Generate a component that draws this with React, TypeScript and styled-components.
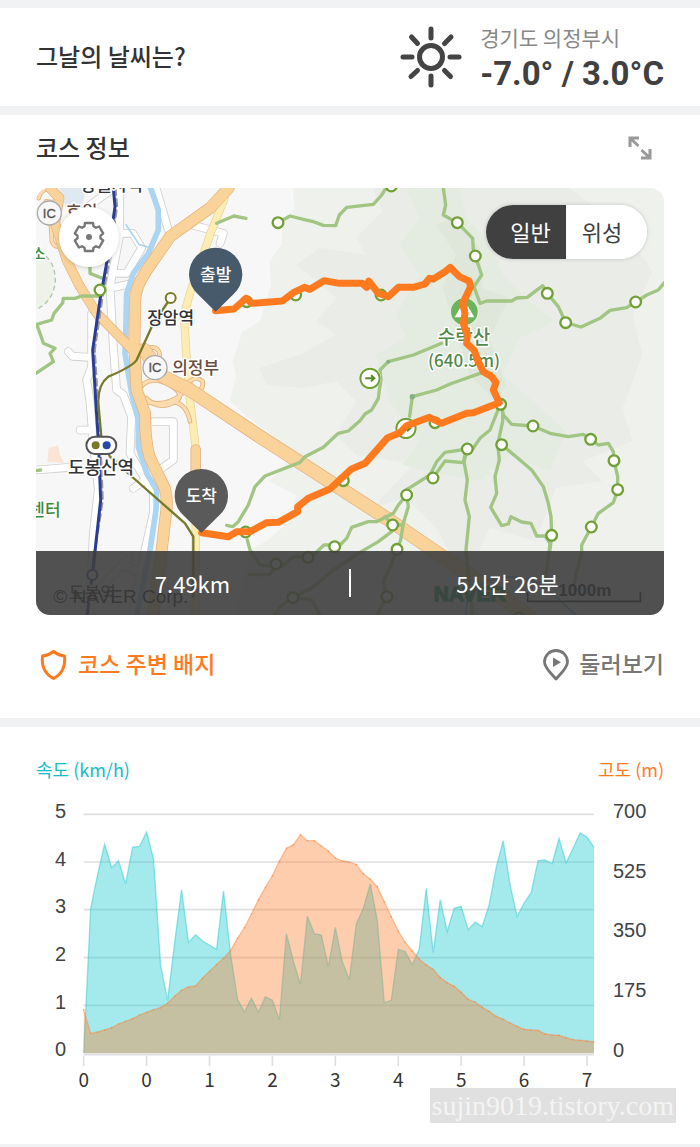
import React, { useState } from "react";
import styled, { createGlobalStyle } from "styled-components";

const sans = `"Noto Sans CJK KR", "Noto Sans", sans-serif`;

const GlobalStyle = createGlobalStyle`
  * { box-sizing: border-box; }
  body { margin: 0; background: #f1f2f4; font-family: ${sans}; color: #333; }
  button { font: inherit; color: inherit; border: 0; padding: 0; background: none; cursor: pointer; }
  h2, p { margin: 0; }
`;

const Page = styled.main`
  display: flex;
  flex-direction: column;
  gap: 9px;
  padding: 8px 0 3px;
`;

const Section = styled.section`
  position: relative;
  background: #fff;
  padding: 0 36px;
`;

const Title = styled.h2`
  padding-bottom: 2px;
  font-size: 24px;
  line-height: 36px;
  font-weight: 500;
`;

const WeatherRow = styled.div`
  display: flex;
  align-items: center;
  justify-content: space-between;
  height: 98px;
`;

const Weather = styled.div`
  display: flex;
  align-items: center;
  gap: 18px;
`;

const Place = styled.p`
  font-size: 21px;
  line-height: 34px;
  color: #888;
`;

const Temperature = styled.p`
  font-family: Roboto, sans-serif;
  font-size: 33px;
  line-height: 40px;
  font-weight: 700;
  color: #404040;
`;

const CourseHeader = styled.div`
  display: flex;
  align-items: center;
  justify-content: space-between;
  height: 66px;
  margin-bottom: 7px;
`;

const IconButton = styled.button`
  display: grid;
  place-items: center;
  width: 48px;
  height: 48px;
`;

const MapCard = styled.div`
  position: relative;
  overflow: hidden;
  border-radius: 14px;
  aspect-ratio: 628 / 427;
`;

const MapSvg = styled.svg`
  display: block;
  width: 100%;
  height: 100%;
`;

const SettingsButton = styled.button`
  position: absolute;
  top: 19px;
  left: 23px;
  display: grid;
  place-items: center;
  width: 60px;
  height: 60px;
  border-radius: 50%;
  background: #fff;
  box-shadow: 0 1px 4px rgba(0, 0, 0, 0.18);
`;

const Toggle = styled.div`
  position: absolute;
  top: 17px;
  right: 17px;
  display: flex;
  height: 54px;
  border-radius: 27px;
  overflow: hidden;
  background: #fff;
  box-shadow: 0 0 4px rgba(0, 0, 0, 0.18);
`;

const ToggleButton = styled.button<{ $on: boolean }>`
  width: 80px;
  padding-bottom: 2px;
  font-size: 22px;
  line-height: 52px;
  background: ${(p) => (p.$on ? "#404040" : "#fff")};
  color: ${(p) => (p.$on ? "#fff" : "#404040")};
  &:first-child { padding-left: 9px; }
  &:last-child { padding-right: 9px; width: 81px; }
`;

const StatsBar = styled.div`
  position: absolute;
  inset: auto 0 0;
  display: flex;
  align-items: center;
  height: 64px;
  background: rgba(62, 62, 62, 0.9);
`;

const Stat = styled.p`
  flex: 1;
  text-align: center;
  font-size: 22px;
  line-height: 28px;
  color: #fff;
  & + & { border-left: 2px solid #fff; }
`;

const Actions = styled.div`
  display: flex;
  align-items: center;
  justify-content: space-between;
  height: 99px;
  margin-bottom: 4px;
`;

const ActionButton = styled.button<{ $color: string }>`
  display: flex;
  align-items: center;
  gap: 9px;
  font-size: 23px;
  line-height: 32px;
  font-weight: 500;
  color: ${(p) => p.$color};
`;

const ActionText = styled.span`
  padding-bottom: 3px;
`;

const Legend = styled.div`
  display: flex;
  justify-content: space-between;
  padding-top: 28px;
  height: 63px;
`;

const LegendItem = styled.span<{ $color: string }>`
  font-size: 18px;
  line-height: 28px;
  color: ${(p) => p.$color};
`;

const ChartSvg = styled.svg`
  display: block;
  width: 100%;
  margin-bottom: 44px;
`;

const Watermark = styled.span`
  position: absolute;
  right: 24px;
  bottom: 21px;
  height: 35px;
  padding: 0 2px;
  font-family: "Liberation Serif", serif;
  font-size: 28px;
  line-height: 35px;
  color: #f4f4f4;
  background: rgba(214, 214, 214, 0.75);
`;

/* ---------- icons ---------- */

function SunIcon() {
  return (
    <svg width="62" height="62" viewBox="-31 -31 62 62" fill="none" stroke="#444" strokeWidth="5" strokeLinecap="round" aria-hidden="true">
      <circle r="11.5" />
      <path d="M0-19V-28M0 19V28M-19 0H-28M19 0H28M13.5-13.5L20-20M-13.5-13.5L-19.5-20M13.5 13.5L19.5 19.5M-13.5 13.5L-20 19.5" />
    </svg>
  );
}

function ExpandIcon() {
  return (
    <svg width="24" height="24" viewBox="0 0 24 24" fill="none" stroke="#999" strokeWidth="3" aria-hidden="true">
      <path d="M11 2H2V11M2 2L10.500 10" />
      <path d="M13 22H22V13M22 22L13.500 14" />
    </svg>
  );
}

function gearPath() {
  const parts: string[] = [];
  const at = (deg: number, r: number) => {
    const a = ((deg - 90) * Math.PI) / 180;
    return `${(Math.cos(a) * r).toFixed(2)} ${(Math.sin(a) * r).toFixed(2)}`;
  };
  for (let i = 0; i < 6; i++) {
    const c = i * 60;
    parts.push(at(c - 16, 14.6), at(c + 16, 14.6), at(c + 23, 11.6), at(c + 37, 11.6));
  }
  return `M${parts.join("L")}Z`;
}

function GearIcon() {
  return (
    <svg width="34" height="34" viewBox="-17 -17 34 34" aria-hidden="true">
      <path d={gearPath()} fill="none" stroke="#777" strokeWidth="2.4" strokeLinejoin="round" />
      <circle r="3" fill="#777" />
    </svg>
  );
}

function ShieldIcon() {
  return (
    <svg width="33" height="32" viewBox="0 0 33 32" fill="none" stroke="#ff7a1f" strokeWidth="3" strokeLinejoin="round" aria-hidden="true">
      <path d="M17.5 2.5C14.500 5 10.500 6.500 6.500 7C5.500 16 8 24.500 17.500 29.500C27 24.500 29.500 16 28.500 7C24.500 6.500 20.500 5 17.500 2.500Z" />
    </svg>
  );
}

function PinPlayIcon() {
  return (
    <svg width="28" height="32" viewBox="0 0 28 32" fill="none" stroke="#777" strokeWidth="2.8" strokeLinejoin="round" aria-hidden="true">
      <path d="M14 30C9 24 2.500 19 2.500 13A11.500 11.500 0 0 1 25.500 13C25.500 19 19 24 14 30Z" />
      <path d="M11 8.500V18L19 13.200Z" fill="#777" stroke="none" />
    </svg>
  );
}

/* ---------- map ---------- */

const highways = [
  { w: 26, d: "M42 0L70 30L57 106L92 216L132 296L182 376L290 486" },
  { w: 32, d: "M578 0L522 60L402 146L330 250Q297 300 297 340L295 476L302 606L327 676Q328 780 345 816L386 900Q396 930 390 976L377 1086L352 1281" },
  { w: 38, d: "M325 486L382 566L462 606L672 746L1052 991L1182 1080L1302 1161L1480 1285" },
];

const ramps = [
  "M330 520Q318 480 350 478Q376 480 370 520",
  "M312 600Q340 560 400 590Q450 620 420 640Q370 670 330 630",
  "M450 590Q480 560 500 580Q505 610 470 612",
  "M325 640Q390 660 440 616M400 640Q450 640 462 700",
  "M8 30Q20 -10 60 10Q80 50 30 40M44 100L48 160Q60 190 80 160",
];

const streets = [
  "M252 0L250 146L222 296L232 476L242 606L262 620L287 686L282 796L352 916V976L327 1086L290 1281",
  "M167 376V536L152 576L162 640L172 766L187 906L172 1036L160 1281",
  "M257 136H290L317 180L272 256H232",
  "M222 301L312 281",
  "M360 0L397 126",
  "M452 106L562 136L552 166",
  "M97 491L110 505L162 508",
  "M352 701H412V816L292 901",
  "M0 846L102 838M132 726H162",
  "M150 60L220 10",
  "M280 1110L200 1190M260 1130L350 1170",
];

const trails = [
  "M726 104L762 84L802 94L832 101L862 112L899 113L910 81L932 58L1012 49L1037 21L1047 5L1066 -4",
  "M1222 0L1229 51L1222 81L1264 104L1310 151L1312 186L1318 204L1337 261L1314 296L1332 346L1352 339L1427 339L1442 330L1474 328L1520 293L1534 316L1567 356L1589 404L1635 417L1692 391L1722 367L1772 359L1799 342L1832 321L1867 306L1885 284",
  "M1217 466L1132 501L1057 521L1032 546L1035 576L1030 606L1027 631L1007 666L987 678L972 698L937 729L907 736L862 778L807 806L792 823L687 864L657 896L637 951L607 1001L590 1016L572 1012",
  "M1367 556L1332 556L1242 588L1202 606L1129 626L1120 691",
  "M1392 651L1362 726L1332 751L1310 783L1294 783L1227 793L1202 821L1182 861L1112 905V921L1087 951L1072 976L1042 991L1022 1001H997L947 1018L932 1051L912 1071H864L832 1101L816 1108L772 1106L737 1136L672 1131L642 1086L634 1056",
  "M1191 870L1227 819L1282 824L1290 786",
  "M1112 921L1117 956L1102 1006L1094 1056L1083 1084L1067 1126L1042 1181L1053 1226L1022 1281",
  "M1047 986L1070 1011L1067 1031L1027 1061L972 1093L892 1146L832 1196L771 1229L732 1256L715 1281M771 1229L827 1236L852 1281",
  "M1070 1011H1100",
  "M1294 783L1284 821L1294 876L1287 936L1300 986L1290 1086L1310 1281",
  "M1394 651L1402 681L1427 709L1491 714L1542 736L1597 746L1642 739L1664 754L1687 771L1717 766L1732 791L1734 818L1745 866V905L1732 944L1687 976L1666 1017L1637 1071V1091L1612 1196",
  "M1400 666V700L1385 770L1390 816L1377 866L1382 916L1364 958L1397 1013L1417 1008L1425 986L1457 1002L1485 1006L1502 1044H1527L1542 1066L1537 1110L1527 1180",
  "M1397 770L1452 816L1487 846L1522 896L1537 946L1545 986L1547 1042L1542 1086",
  "M192 324H137L117 331H82L80 345L54 376L47 396L2 409L12 436L22 466L57 481L42 496L52 521L0 556",
  "M542 106L594 84L630 91",
  "M162 236V256L197 270",
  "M0 848L14 846",
  "M640 1160L700 1160L720 1135",
];

const stops = [
  [726, 104], [1066, -6], [1264, 104], [1318, 204], [1534, 316], [1589, 404], [1799, 342],
  [632, 341], [779, 321], [1035, 321], [1394, 649], [1197, 704], [922, 878], [1294, 783],
  [1191, 870], [1112, 921], [1070, 1011], [1083, 1084], [896, 1076], [816, 1108], [720, 1128],
  [771, 1229], [1053, 1226], [1491, 714], [1664, 754], [1734, 818], [1745, 905], [1666, 1017],
  [1397, 770], [1547, 1042], [629, 1032], [192, 306], [1448, 1290],
];

const route =
  "M539 368L594 363L630 331L647 346L739 339L772 314L805 298L822 304L864 278L910 286H979L992 298L998 279L1027 316L1057 326L1087 298H1132L1167 288L1180 271L1192 273L1227 251L1243 238L1270 266L1299 279L1304 296L1280 346L1287 376L1282 406L1294 441L1292 466L1314 486L1327 521L1342 551L1367 566L1380 584L1372 606L1390 644L1312 674L1292 676L1217 706L1180 688L1112 713L1092 734L1055 749L987 826L945 844L882 903L817 931L785 956V971L727 1003L692 1004L642 1031H602L577 1046L497 1034";

const river =
  "M344 0L367 66V126L337 196L292 256L272 316L270 406L267 496L287 616L307 696V776L332 856L362 906L360 966L342 1086L302 1281";

type LabelProps = { x: number; y: number; size?: number; color?: string; children: React.ReactNode };

function MapLabel({ x, y, size = 51, color = "#333", children }: LabelProps) {
  return (
    <text x={x} y={y} fontSize={size} fill={color} fontWeight={500} textAnchor="middle" stroke="#fff" strokeWidth="9" strokeLinejoin="round" paintOrder="stroke" fontFamily={sans}>
      {children}
    </text>
  );
}

function Interchange({ x, y }: { x: number; y: number }) {
  return (
    <g>
      <circle cx={x} cy={y} r="36" fill="#f7f7f7" stroke="#aaa" strokeWidth="4" />
      <text x={x} y={y + 14} fontSize="39" fill="#555" stroke="#555" strokeWidth="1" textAnchor="middle" fontFamily="Liberation Sans, sans-serif">IC</text>
    </g>
  );
}

function Marker({ x, y, color, label }: { x: number; y: number; color: string; label: string }) {
  return (
    <g transform={`translate(${x} ${y})`}>
      <path d="M0 112L-54 59A80 80 0 1 1 54 59Z" fill={color} />
      <text y="20" fontSize="51" fontWeight={500} fill="#fff" textAnchor="middle" fontFamily={sans}>{label}</text>
    </g>
  );
}

function CourseMap() {
  return (
    <MapSvg viewBox="0 0 1884 1281" preserveAspectRatio="xMidYMid slice" role="img" aria-label="코스 지도">
      <rect width="1884" height="1281" fill="#f7f7f7" />
      <path fill="#eff1ed" d="M770 0L775 60L740 110L737 170L700 220L705 290L672 400L620 430L590 520L600 560L582 640L640 690L720 750L750 830L700 880L780 920L760 1000L690 1060L642 1086L600 1281H1884V0Z" />
      <path fill="#eaede7" d="M1010 0L1040 70L960 150L990 200L850 180L780 230L820 260L900 330L840 400L900 440L790 500L670 540L690 590L800 600L900 580L960 640L900 740L960 800L1130 830L1010 960L1110 930L1200 1020L1240 1090L1180 1180L1300 1160L1360 1020L1500 1060L1560 900L1700 880L1640 820L1790 760L1760 660L1820 500L1790 380L1850 250L1760 120L1600 0Z" />
      <path fill="#e4ebe1" d="M1110 0L1150 90L1090 170L1150 260L1080 380L1110 450L1020 500L1060 640L1150 760L1100 830L1220 860L1330 880L1420 800L1540 850L1590 730L1490 640L1400 560L1450 450L1560 400L1480 340L1400 260L1360 160L1290 90L1270 0Z" />
      <path fill="#dee7d9" d="M1200 110L1260 200L1220 300L1260 420L1300 560L1380 640L1410 590L1360 450L1420 330L1340 300L1330 180L1260 90Z" />
      <path fill="#dfe9f2" d="M70 0H150L140 50L90 60Z" />
      <path fill="#eef2ea" d="M0 210Q58 210 58 270Q58 340 0 365Z" />
      <path d="M30 205Q58 230 58 280Q52 340 0 365" fill="none" stroke="#a9c9a6" strokeWidth="4" strokeDasharray="14 10" />
      <path d="M38 780L66 772L72 800L84 824L34 822Z" fill="#f9e4d5" />

      <g fill="none" strokeLinejoin="round" strokeLinecap="round">
        {streets.map((d) => <path key={d} d={d} stroke="#cfcfcf" strokeWidth="26" />)}
        {streets.map((d) => <path key={d} d={d} stroke="#fff" strokeWidth="21" />)}
        <path d={river} stroke="#abd5f3" strokeWidth="17" />
        <path d="M367 126L345 180L310 170L270 110" stroke="#abd5f3" strokeWidth="5" />
        <path d="M566 30L522 140L462 316L444 380L452 516L462 636L479 780V1281" stroke="#ead79a" strokeWidth="25" />
        <path d="M566 30L522 140L462 316L444 380L452 516L462 636L479 780V1281" stroke="#fdedb4" strokeWidth="20" />
        <path d="M479 784V900" stroke="#e5b079" strokeWidth="31" />
        <path d="M479 784V900" stroke="#f9d39a" strokeWidth="26" />
        {ramps.map((d) => <path key={d} d={d} stroke="#e5b079" strokeWidth="14" />)}
        {ramps.map((d) => <path key={d} d={d} stroke="#fbdcae" strokeWidth="9" />)}
        {highways.map((h) => <path key={h.d} d={h.d} stroke="#e5b079" strokeWidth={h.w + 4} />)}
        {highways.map((h) => <path key={h.d} d={h.d} stroke="#f9d39a" strokeWidth={h.w} />)}
        {trails.map((d) => <path key={d} d={d} stroke="#a1c582" strokeWidth="10" />)}
        <path d="M1290 1281Q1290 1220 1330 1190Q1440 1140 1530 1200L1620 1281" stroke="#7fb4e8" strokeWidth="6" />
        <path d="M238 0L243 56L233 126L216 236L198 336L176 486L185 636L193 756L200 936L172 1120" stroke="#999" strokeWidth="7" strokeDasharray="20 14" />
        <path d="M232 0L237 56L227 126L210 236L192 336L170 486L179 636L187 756L194 936L169 1161L154 1281" stroke="#2a3d96" strokeWidth="9" />
        <path d="M404 330L352 406L302 516Q290 535 217 566Q185 590 187 646L197 756L222 806L282 861L447 1006L472 1046V1226" stroke="#767a2a" strokeWidth="7" />
      </g>

      {stops.map(([x, y]) => <circle key={`${x}-${y}`} cx={x} cy={y} r="16" fill="#fff" stroke="#71a036" strokeWidth="7" />)}
      <circle cx="404" cy="330" r="15" fill="#fff" stroke="#767a2a" strokeWidth="6" />
      <circle cx="169" cy="1161" r="15" fill="#fff" stroke="#2a3d96" strokeWidth="6" />
      <circle cx="1129" cy="626" r="8" fill="#83b183" />
      <circle cx="1057" cy="521" r="6" fill="#83b183" />
      {[[1002, 571], [1110, 721]].map(([x, y]) => (
        <g key={x} transform={`translate(${x} ${y})`}>
          <circle r="33" fill="#fff" />
          <circle r="29" fill="#fff" stroke="#71a036" strokeWidth="6" />
          <path d="M-14 0H12M3-9L13 0L3 9" fill="none" stroke="#5c8a2a" strokeWidth="6" />
        </g>
      ))}
      <circle cx="1285" cy="371" r="42" fill="#6bb35c" stroke="#e3eddd" strokeWidth="4" />
      <path d="M1256 388L1275 355L1286 368L1296 355L1315 388Z" fill="#fff" />
      <rect x="151" y="746" width="90" height="52" rx="26" fill="#fff" stroke="#555" strokeWidth="6" />
      <circle cx="179" cy="772" r="12" fill="#767a2a" />
      <circle cx="212" cy="772" r="12" fill="#2348a5" />

      <Interchange x={40} y={75} />
      <Interchange x={357} y={539} />
      <MapLabel x={227} y={8}>망월사역</MapLabel>
      <MapLabel x={137} y={90} color="#6b4d40">호원</MapLabel>
      <MapLabel x={8} y={214} color="#3d8b3d" size={45}>소</MapLabel>
      <MapLabel x={404} y={407}>장암역</MapLabel>
      <MapLabel x={479} y={557} color="#6b4d40">의정부</MapLabel>
      <MapLabel x={195} y={858} size={54}>도봉산역</MapLabel>
      <MapLabel x={27} y={984} color="#3d8b3d">센터</MapLabel>
      <MapLabel x={169} y={1234}>도봉역</MapLabel>
      <MapLabel x={1284} y={469} size={57} color="#4f8a4a">수락산</MapLabel>
      <MapLabel x={1284} y={538} size={51} color="#4f8a4a">(640.5m)</MapLabel>
      <g fontFamily="Liberation Sans, sans-serif" fill="#000">
        <text x="52" y="1246" fontSize="57">© NAVER Corp.</text>
        <text x="1193" y="1238" fontSize="63" fontWeight="700" fill="#00a651" stroke="#00a651" strokeWidth="4">NAVER</text>
        <text x="1567" y="1223" fontSize="51" fontWeight="700">1000m</text>
      </g>
      <path d="M1475 1212V1240H1813V1212" fill="none" stroke="#000" strokeWidth="5" />

      <path d={route} fill="none" stroke="#ff7a1f" strokeWidth="21" strokeLinejoin="round" strokeLinecap="round" />
      <Marker x={539} y={259} color="#465a6c" label="출발" />
      <Marker x={496} y={923} color="#5a5a5a" label="도착" />
    </MapSvg>
  );
}

/* ---------- chart ---------- */

const BASE = 789;
const LEFT = 143;
const RIGHT = 1674;

const speed = [
  789, 355, 253, 162, 233, 212, 281, 171, 169, 126, 208, 525, 632, 460, 299, 457, 434, 453, 465, 479,
  303, 490, 627, 666, 625, 666, 620, 631, 689, 431, 513, 583, 379, 431, 435, 530, 412, 515, 569, 402,
  355, 282, 390, 638, 631, 478, 485, 524, 477, 295, 487, 329, 424, 355, 349, 419, 396, 410, 345, 233,
  152, 285, 380, 339, 308, 212, 210, 221, 145, 219, 175, 129, 141, 172,
];

const altitude = [
  659, 730, 726, 720, 713, 702, 694, 686, 675, 667, 659, 653, 640, 619, 601, 591, 588, 565, 544, 524,
  505, 482, 445, 413, 372, 329, 292, 257, 213, 175, 164, 134, 152, 152, 168, 183, 204, 213, 216, 224,
  251, 268, 290, 335, 380, 423, 457, 483, 507, 525, 538, 563, 578, 589, 607, 628, 636, 652, 664, 679,
  688, 699, 709, 718, 720, 721, 732, 735, 736, 743, 749, 751, 753, 756,
];

const step = (RIGHT - LEFT) / (speed.length - 1);
const line = (ys: number[]) => ys.map((y, i) => `${(LEFT + i * step).toFixed(1)} ${y}`).join("L");

function Series({ ys, color, dots }: { ys: number[]; color: string; dots?: boolean }) {
  return (
    <g>
      <path d={`M${LEFT} ${BASE}L${line(ys)}L${RIGHT} ${BASE}Z`} fill={color} fillOpacity="0.4" />
      <path d={`M${line(ys)}`} fill="none" stroke={color} strokeOpacity="0.45" strokeWidth="4" />
      {dots && ys.map((y, i) => <circle key={i} cx={LEFT + i * step} cy={y} r="2.5" fill={color} fillOpacity="0.6" />)}
    </g>
  );
}

function Chart() {
  return (
    <ChartSvg viewBox="0 0 1884 930" role="img" aria-label="속도와 고도 그래프">
      <g stroke="#dfdfdf" strokeWidth="5">
        {[73, 216, 359, 503, 646].map((y) => <path key={y} d={`M${LEFT} ${y}H${RIGHT}`} />)}
        <path d={`M${LEFT} 793H${RIGHT}`} strokeWidth="7" />
        {[0, 1, 2, 3, 4, 5, 6, 7, 8].map((i) => <path key={i} d={`M${LEFT + i * 9 * step} 797V828`} />)}
      </g>
      <Series ys={speed} color="#1cc8d0" />
      <Series ys={altitude} color="#fa8235" dots />
      <g fontFamily="Liberation Sans, sans-serif" fontSize="60" fill="#404447">
        {[5, 4, 3, 2, 1, 0].map((n, i) => <text key={n} x="90" y={84 + i * 143} textAnchor="end">{n}</text>)}
        {[700, 525, 350, 175, 0].map((n, i) => <text key={n} x="1731" y={84 + i * 179}>{n}</text>)}
      </g>
      <g fontFamily={sans} fontSize="57" fill="#333" textAnchor="middle">
        {[0, 0, 1, 2, 3, 4, 5, 6, 7].map((n, i) => <text key={i} x={LEFT + i * 9 * step} y="890">{n}</text>)}
      </g>
    </ChartSvg>
  );
}

export default function App() {
  const [view, setView] = useState("일반");
  return (
    <>
      <GlobalStyle />
      <Page>
        <Section>
          <WeatherRow>
            <Title>그날의 날씨는?</Title>
            <Weather>
              <SunIcon />
              <div>
                <Place>경기도 의정부시</Place>
                <Temperature>-7.0° / 3.0°C</Temperature>
              </div>
            </Weather>
          </WeatherRow>
        </Section>

        <Section>
          <CourseHeader>
            <Title>코스 정보</Title>
            <IconButton aria-label="지도 확대"><ExpandIcon /></IconButton>
          </CourseHeader>
          <MapCard>
            <CourseMap />
            <SettingsButton aria-label="지도 설정"><GearIcon /></SettingsButton>
            <Toggle>
              {["일반", "위성"].map((name) => (
                <ToggleButton key={name} $on={view === name} aria-pressed={view === name} onClick={() => setView(name)}>
                  {name}
                </ToggleButton>
              ))}
            </Toggle>
            <StatsBar>
              <Stat>7.49km</Stat>
              <Stat>5시간 26분</Stat>
            </StatsBar>
          </MapCard>
          <Actions>
            <ActionButton $color="#ff7a1f"><ShieldIcon /><ActionText>코스 주변 배지</ActionText></ActionButton>
            <ActionButton $color="#777"><PinPlayIcon /><ActionText>둘러보기</ActionText></ActionButton>
          </Actions>
        </Section>

        <Section>
          <Legend>
            <LegendItem $color="#12bcc8">속도 (km/h)</LegendItem>
            <LegendItem $color="#ff7a1f">고도 (m)</LegendItem>
          </Legend>
          <Chart />
          <Watermark>sujin9019.tistory.com</Watermark>
        </Section>
      </Page>
    </>
  );
}
